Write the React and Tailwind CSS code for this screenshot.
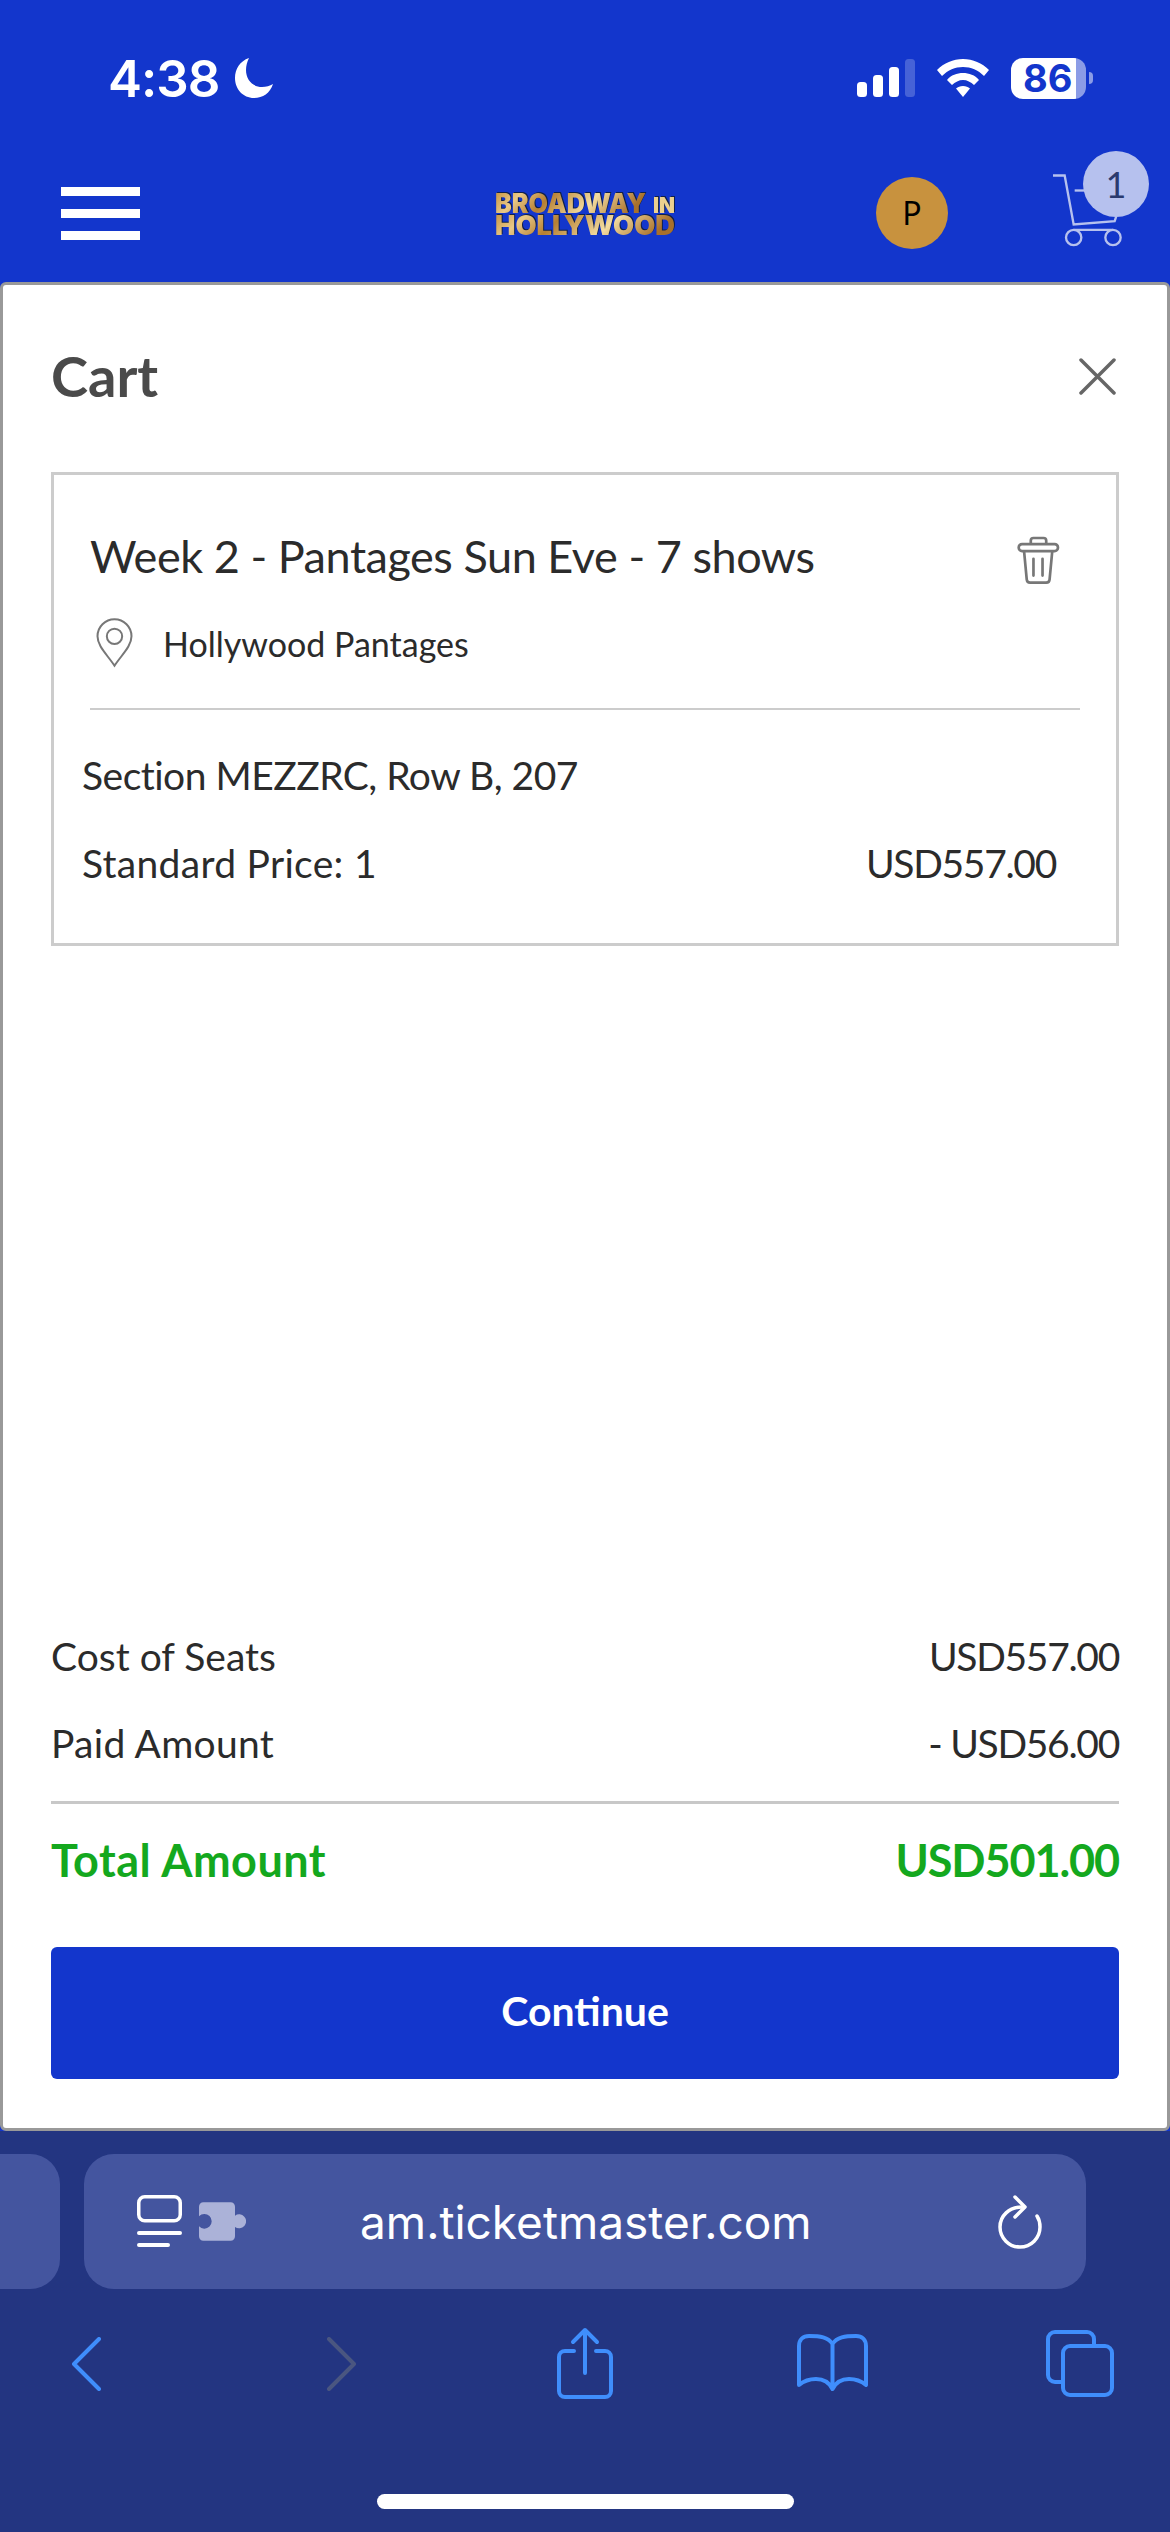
import React from 'react'

const font = "font-['Lato',sans-serif]"

const Moon = () => (
  <svg width="38" height="40" viewBox="0 0 38 40" fill="#fff">
    <path d="M14 0C5 3 0 11 0 20c0 11 8 20 19 20 9 0 16-5 19-14-3 2-7 3-11 3C18 29 11 22 11 12c0-4 1-8 3-12z" />
  </svg>
)

const Signal = () => (
  <svg width="58" height="38" viewBox="0 0 58 38" fill="#fff">
    <rect x="0" y="23" width="10" height="15" rx="3.5" />
    <rect x="16" y="16" width="10" height="22" rx="3.5" />
    <rect x="32" y="8" width="10" height="30" rx="3.5" />
    <rect x="48" y="0" width="10" height="38" rx="3.5" fillOpacity="0.22" />
  </svg>
)

const Wifi = () => (
  <svg width="52" height="38" viewBox="0 0 52 38" fill="#fff">
    <path d="M26 0c10 0 19 4 26 11l-5 6C41 11 34 8 26 8S11 11 5 17l-5-6C7 4 16 0 26 0z" />
    <path d="M26 14c6 0 12 2 16 7l-5 5c-3-3-7-5-11-5s-8 2-11 5l-5-5c4-5 10-7 16-7z" />
    <path d="M26 27c3 0 5 1 7 2.500L26 38l-7-8.500c2-1.500 4-2.500 7-2.500z" />
  </svg>
)

const Logo = () => (
  <svg width="180" height="44" viewBox="0 0 180 44" className="mt-[2px] overflow-visible drop-shadow-[1px_-1px_0_#10204a] font-['Inter',sans-serif] font-black">
    <defs>
      <linearGradient id="gold" x1="0" y1="0" x2="1" y2="0.2">
        <stop offset="0" stopColor="#c08a35" />
        <stop offset="0.2" stopColor="#e9c987" />
        <stop offset="0.4" stopColor="#b67f32" />
        <stop offset="0.7" stopColor="#f3dca0" />
        <stop offset="1" stopColor="#a8702b" />
      </linearGradient>
    </defs>
    <text x="0" y="21" fontSize="27" fill="url(#gold)" textLength="151" lengthAdjust="spacingAndGlyphs">BROADWAY</text>
    <text x="158" y="21" fontSize="22" fill="#ecd08f" textLength="22" lengthAdjust="spacingAndGlyphs">IN</text>
    <text x="0" y="43" fontSize="27" fill="url(#gold)" textLength="180" lengthAdjust="spacingAndGlyphs">HOLLYWOOD</text>
  </svg>
)

const CartIcon = () => (
  <svg width="70" height="77" viewBox="700 390 210 230" fill="none" stroke="#b6c1ee" strokeWidth="7">
    <path d="M700 403h35l27 147 123-10 5-15" />
    <path d="M765 448h35" />
    <path d="M762 566h118" />
    <circle cx="762" cy="589" r="23" />
    <circle cx="880" cy="589" r="23" />
  </svg>
)

const CloseIcon = () => (
  <svg width="37" height="37" viewBox="0 0 37 37" stroke="#666" strokeWidth="3.5" strokeLinecap="round">
    <path d="M2 2l33 33M35 2L2 35" />
  </svg>
)

const TrashIcon = () => (
  <svg width="45" height="49" viewBox="108 48 134 146" fill="none" stroke="#777" strokeWidth="8">
    <path d="M152 72V62a8 8 0 0 1 8-8h30a8 8 0 0 1 8 8v10" />
    <rect x="116" y="72" width="117" height="21" rx="10" />
    <path d="M132 93l8 85a10 10 0 0 0 10 9h48a10 10 0 0 0 10-9l8-85" />
    <path d="M160 116v50M187 116v50" strokeLinecap="round" />
  </svg>
)

const PinIcon = () => (
  <svg width="39" height="50" viewBox="104 60 116 150" fill="none" stroke="#777" strokeWidth="6">
    <path d="M162 203C140 170 111 145 111 115a51 51 0 0 1 102 0C213 145 184 170 162 203z" />
    <circle cx="162" cy="115" r="23" />
  </svg>
)

const ReaderIcon = () => (
  <svg width="45" height="54" viewBox="0 0 45 54" fill="none" stroke="#fff" strokeLinecap="round">
    <rect x="1.750" y="1.750" width="41.500" height="24" rx="6" strokeWidth="3.500" />
    <path d="M2 38h41M2 50h29" strokeWidth="4" />
  </svg>
)

const PuzzleIcon = () => (
  <svg width="47" height="39" viewBox="237 68 141 115" fill="#abb2d8">
    <path d="M250 68h82a13 13 0 0 1 13 13v27a21 21 0 1 1 0 34v28a13 13 0 0 1-13 13h-82a13 13 0 0 1-13-13v-30a22 22 0 1 0 0-30V81a13 13 0 0 1 13-13z" />
  </svg>
)

const ReloadIcon = () => (
  <svg width="44" height="54" viewBox="0 0 44 54" fill="none" stroke="#fff" strokeWidth="3.500" strokeLinecap="round" strokeLinejoin="round">
    <path d="M24 12C11 12 2 21 2 32a20 20 0 0 0 40 0c0-4-1-8-3-11" />
    <path d="M17 2l10 10-10 10" />
  </svg>
)

const ToolbarIcons = () => (
  <div className="flex items-start h-[72px] pl-[71px]">
    <svg className="mt-[10px]" width="31" height="54" viewBox="0 0 31 54" fill="none" stroke="#3f8efc" strokeWidth="4" strokeLinecap="round" strokeLinejoin="round">
      <path d="M28 2L3 27l25 25" />
    </svg>
    <svg className="mt-[10px] ml-[224px]" width="31" height="54" viewBox="0 0 31 54" fill="none" stroke="#4a5680" strokeWidth="4" strokeLinecap="round" strokeLinejoin="round">
      <path d="M3 2l25 25L3 52" />
    </svg>
    <svg className="ml-[200px]" width="56" height="72" viewBox="0 0 56 72" fill="none" stroke="#3f8efc" strokeWidth="4" strokeLinecap="round" strokeLinejoin="round">
      <path d="M17 24H8a6 6 0 0 0-6 6v34a6 6 0 0 0 6 6h40a6 6 0 0 0 6-6V30a6 6 0 0 0-6-6h-9" />
      <path d="M28 46V3M16 15L28 3l12 12" />
    </svg>
    <svg className="mt-[7px] ml-[184px]" width="71" height="58" viewBox="0 0 71 58" fill="none" stroke="#3f8efc" strokeWidth="4" strokeLinecap="round" strokeLinejoin="round">
      <path d="M35.500 10C31 3 23 2 12 2 6 2 2 6 2 12v39c6-5 11-6 17-6 7 0 13 3 16.500 10C39 48 45 45 52 45c6 0 11 1 17 6V12c0-6-4-10-10-10-11 0-19 1-23.500 8zM35.500 10v44" />
    </svg>
    <svg className="mt-[3px] ml-[178px]" width="68" height="67" viewBox="0 0 68 67" fill="none" stroke="#3f8efc" strokeWidth="4">
      <path d="M17 52H9a7 7 0 0 1-7-7V9a7 7 0 0 1 7-7h32a7 7 0 0 1 7 7v7" />
      <rect x="17" y="16" width="49" height="49" rx="7" />
    </svg>
  </div>
)

const Row = ({ left, right, className, leftClass = 'tracking-[0.3px]', rightClass = 'tracking-[-1.3px]' }) => (
  <div className={`flex justify-between items-center ${className}`}>
    <span className={leftClass}>{left}</span>
    <span className={rightClass}>{right}</span>
  </div>
)

export default function App() {
  return (
    <div className={`w-[1170px] h-[2532px] flex flex-col overflow-hidden bg-[#1336cc] ${font}`}>
      {/* status bar */}
      <div className="h-[142px] flex items-start justify-between pt-[57px] pl-[108px] pr-[77px] text-white">
        <div className="flex items-center gap-[16px] h-[42px]">
          <span className="font-['Inter',sans-serif] font-semibold text-[51px] leading-none tracking-[-1px]">4:38</span>
          <Moon />
        </div>
        <div className="flex items-center h-[42px]">
          <Signal />
          <div className="ml-[22px]"><Wifi /></div>
          <div className="ml-[22px] w-[75px] h-[41px] rounded-[12px] flex items-center pl-[12px] bg-[linear-gradient(90deg,#fff_87%,#8b9ce6_87%)]">
            <span className="font-['Inter',sans-serif] font-bold text-[38px] leading-none text-[#1336cc]">86</span>
          </div>
          <div className="ml-[3px] w-[4px] h-[12px] rounded-r-[4px] bg-[#8b9ce6]"></div>
        </div>
      </div>

      {/* nav */}
      <div className="h-[140px] flex items-center pl-[61px] pt-[2px]">
        <div className="w-[79px] flex flex-col gap-[13px]">
          <div className="h-[9px] bg-white"></div>
          <div className="h-[9px] bg-white"></div>
          <div className="h-[9px] bg-white"></div>
        </div>
        <div className="ml-[355px]"><Logo /></div>
        <div className="ml-[201px] w-[72px] h-[72px] rounded-full bg-[#c8923e] flex items-center justify-center text-[32px] text-black font-['Noto_Sans',sans-serif]">P</div>
        <div className="relative ml-[105px] mt-[-8px] w-[96px] h-[77px]">
          <CartIcon />
          <div className="absolute right-0 top-[-20px] w-[66px] h-[66px] rounded-full bg-[#b6c1ee] flex items-center justify-center text-[36px] text-[#2a3a6e]">1</div>
        </div>
      </div>

      {/* cart panel */}
      <div className="h-[1849px] flex flex-col justify-between bg-white border-[3px] border-[#999999] rounded-[6px] px-[48px]">
        <div>
          <div className="flex items-center justify-between h-[182px] pr-[3px]">
            <h1 className="text-[56px] font-bold text-[#4a4a4a]">Cart</h1>
            <CloseIcon />
          </div>
          <div className="mt-[5px] h-[474px] border-[3px] border-[#cccccc] text-[#2b2b2b]">
            <div className="flex items-start justify-between pl-[36px] pr-[55px] pt-[48px]">
              <span className="text-[45px] leading-[66px] tracking-[-0.45px]">Week 2 - Pantages Sun Eve - 7 shows</span>
              <div className="mt-[13px]"><TrashIcon /></div>
            </div>
            <div className="flex items-center pl-[41px] mt-[29px] h-[50px]">
              <PinIcon />
              <span className="ml-[29px] text-[34px]">Hollywood Pantages</span>
            </div>
            <div className="mx-[36px] mt-[40px] h-[2px] bg-[#cccccc]"></div>
            <div className="pl-[28px] pr-[60px] text-[39px] leading-[58px]">
              <div className="mt-[36px] tracking-[-0.5px]">Section MEZZRC, Row B, 207</div>
              <Row className="mt-[30px]" left="Standard Price: 1" right="USD557.00" />
            </div>
          </div>
        </div>
        <div className="pb-[49px]">
          <div className="text-[39px] leading-[58px] text-[#2b2b2b]">
            <Row left="Cost of Seats" right="USD557.00" leftClass="tracking-normal" />
            <Row className="mt-[29px]" left="Paid Amount" right="- USD56.00" />
          </div>
          <div className="mt-[29px] h-[3px] bg-[#c8c8c8]"></div>
          <Row className="mt-[24px] text-[45px] leading-[64px] font-bold text-[#14a81e]" left="Total Amount" right="USD501.00" leftClass="tracking-[0.5px]" rightClass="tracking-[-1.1px]" />
          <button className="mt-[55px] w-full h-[132px] rounded-[6px] bg-[#1336cc] text-white text-[41px] font-bold pb-[5px]">Continue</button>
        </div>
      </div>

      {/* safari toolbar */}
      <div className="flex-1 bg-[#233581]">
        <div className="flex items-center gap-[24px] pt-[23px]">
          <div className="w-[60px] h-[135px] rounded-r-[30px] bg-[#44559f]"></div>
          <div className="w-[1002px] h-[135px] rounded-[30px] bg-[#44559f] flex items-center pl-[53px] pr-[44px]">
            <ReaderIcon />
            <div className="ml-[17px]"><PuzzleIcon /></div>
            <span className="ml-[114px] font-['Inter',sans-serif] text-[46px] leading-none text-white">am.ticketmaster.com</span>
            <div className="ml-auto"><ReloadIcon /></div>
          </div>
        </div>
        <div className="mt-[38px]"><ToolbarIcons /></div>
        <div className="mt-[95px] mx-auto w-[417px] h-[15px] rounded-full bg-white"></div>
      </div>
    </div>
  )
}
